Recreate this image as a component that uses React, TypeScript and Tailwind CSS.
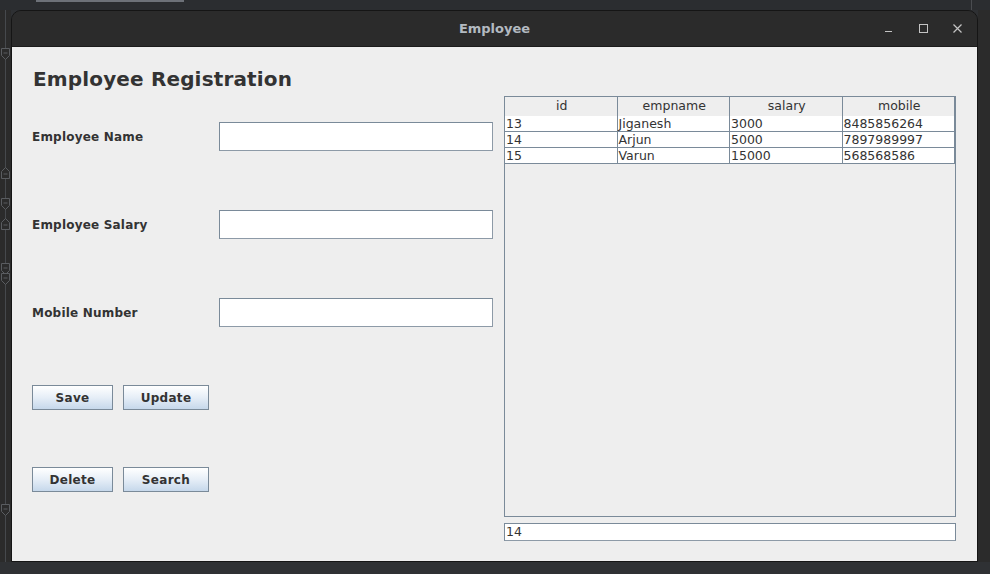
import React from "react";

const font = { fontFamily: '"DejaVu Sans", Verdana, sans-serif' };

function Marker({ top, up }: { top: number; up?: boolean }) {
  return (
    <svg
      className="absolute left-0"
      style={{ top }}
      width="11"
      height="12"
      viewBox="0 0 11 12"
    >
      {up ? (
        <path d="M1.5 11.5 V4.5 L5.5 0.5 L9.5 4.5 V11.5 Z" fill="#2b2b2b" stroke="#5a5d61" strokeWidth="1" />
      ) : (
        <path d="M1.5 0.5 H9.5 V7.5 L5.5 11.5 L1.5 7.5 Z" fill="#2b2b2b" stroke="#5a5d61" strokeWidth="1" />
      )}
      <path d={up ? "M3.5 7 H7.5" : "M3.5 5 H7.5"} stroke="#5a5d61" strokeWidth="1" />
    </svg>
  );
}

function Field() {
  return (
    <div className="h-[29px] w-[274px] bg-white border border-[#7a8a99] border-b-[#8d9aa7] border-r-[#8d9aa7]" />
  );
}

function Btn({ label, w }: { label: string; w: string }) {
  return (
    <div
      className={`${w} h-[25px] flex items-center justify-center border border-[#7a8a99] bg-gradient-to-b from-[#ffffff] via-[#e6eef7] to-[#c6d8eb] text-[12px] font-bold text-[#333333] tracking-[0.3px]`}
    >
      {label}
    </div>
  );
}

const rows = [
  ["13", "Jiganesh", "3000", "8485856264"],
  ["14", "Arjun", "5000", "7897989997"],
  ["15", "Varun", "15000", "568568586"],
];

export default function App() {
  return (
    <div className="relative w-[990px] h-[574px] bg-[#2e3033] overflow-hidden" style={font}>
      {/* top strip */}
      <div className="h-[10px] relative bg-[#2b2d30]">
        <div className="absolute left-[36px] top-0 w-[148px] h-[2px] bg-[#6d7178]" />
        <div className="absolute left-[971px] top-0 w-[1px] h-[10px] bg-[#4a4c50]" />
      </div>
      <div className="flex h-[552px]">
        {/* left strip */}
        <div className="relative w-[11px] bg-[#2b2b2b]">
          <div className="absolute left-[5px] top-0 w-[1px] h-full bg-[#46494d]" />
          <Marker top={38} />
          <Marker top={157} up />
          <Marker top={188} />
          <Marker top={208} up />
          <Marker top={253} />
          <Marker top={263} />
          <Marker top={494} />
        </div>
        {/* window */}
        <div className="w-[967px] h-[552px] flex flex-col rounded-t-[10px] border border-[#151515] bg-[#2b2b2b] overflow-hidden">
          <div className="h-[36px] flex items-center relative border-b border-[#1c1c1c] bg-[#2b2b2b]">
            <div className="flex-1 text-center text-[13px] font-bold text-[#b3bac1] pt-[1px]">Employee</div>
            <div className="absolute right-[13px] top-0 h-full flex items-center gap-[21px]">
              <svg width="13" height="13" viewBox="0 0 13 13">
                <path d="M2 9.5 H9" stroke="#c4c4c4" strokeWidth="1" />
              </svg>
              <svg width="13" height="13" viewBox="0 0 13 13">
                <rect x="2.5" y="2.5" width="8" height="8" fill="none" stroke="#c4c4c4" strokeWidth="1" />
              </svg>
              <svg width="13" height="13" viewBox="0 0 13 13">
                <path d="M2.5 2.5 L10.5 10.5 M10.5 2.5 L2.5 10.5" stroke="#c4c4c4" strokeWidth="1.2" />
              </svg>
            </div>
          </div>
          <div className="flex-1 bg-[#eeeeee] flex pl-[20px]">
            {/* left panel */}
            <div className="w-[461px] flex flex-col text-[#333333]">
              <div className="mt-[20px] h-[23px] flex items-center text-[20px] font-bold leading-none pl-[1px] tracking-[0.15px]">
                Employee Registration
              </div>
              <div className="mt-[32px] flex items-center h-[29px]">
                <div className="w-[187px] text-[12px] font-bold tracking-[0.2px] pt-[1px]">Employee Name</div>
                <Field />
              </div>
              <div className="mt-[59px] flex items-center h-[29px]">
                <div className="w-[187px] text-[12px] font-bold tracking-[0.2px] pt-[1px]">Employee Salary</div>
                <Field />
              </div>
              <div className="mt-[59px] flex items-center h-[29px]">
                <div className="w-[187px] text-[12px] font-bold tracking-[0.2px]">Mobile Number</div>
                <Field />
              </div>
              <div className="mt-[58px] flex gap-[10px]">
                <Btn label="Save" w="w-[81px]" />
                <Btn label="Update" w="w-[86px]" />
              </div>
              <div className="mt-[57px] flex gap-[10px]">
                <Btn label="Delete" w="w-[81px]" />
                <Btn label="Search" w="w-[86px]" />
              </div>
            </div>
            {/* right panel */}
            <div className="ml-[11px] w-[452px] flex flex-col">
              <div className="mt-[49px] h-[421px] border border-[#7a8a99] bg-[#eeeeee] flex flex-col">
                <div className="grid grid-cols-4 h-[19px] border-b border-[#7a8a99]">
                  {["id", "empname", "salary", "mobile"].map((h) => (
                    <div
                      key={h}
                      className="flex items-center justify-center pl-[2px] text-[12.5px] text-[#333333] bg-[#eeeeee] border-r border-[#7a8a99]"
                    >
                      {h}
                    </div>
                  ))}
                </div>
                {rows.map((r) => (
                  <div key={r[0]} className="grid grid-cols-4 h-[16px] border-b border-[#7a8a99] bg-white">
                    {r.map((c, i) => (
                      <div
                        key={i}
                        className="flex items-center pl-[1px] pt-[1px] text-[12.5px] leading-none text-[#333333] border-r border-[#7a8a99]"
                      >
                        {c}
                      </div>
                    ))}
                  </div>
                ))}
              </div>
              <div className="mt-[6px] h-[18px] w-[452px] bg-white border border-[#7a8a99] border-b-[#8d9aa7] flex items-center pl-[1px] text-[12.5px] text-[#333333]">
                14
              </div>
            </div>
          </div>
        </div>
        <div className="flex-1 bg-[#2b2b2b]" />
      </div>
      <div className="h-[12px] bg-[#2f3134]" />
    </div>
  );
}
